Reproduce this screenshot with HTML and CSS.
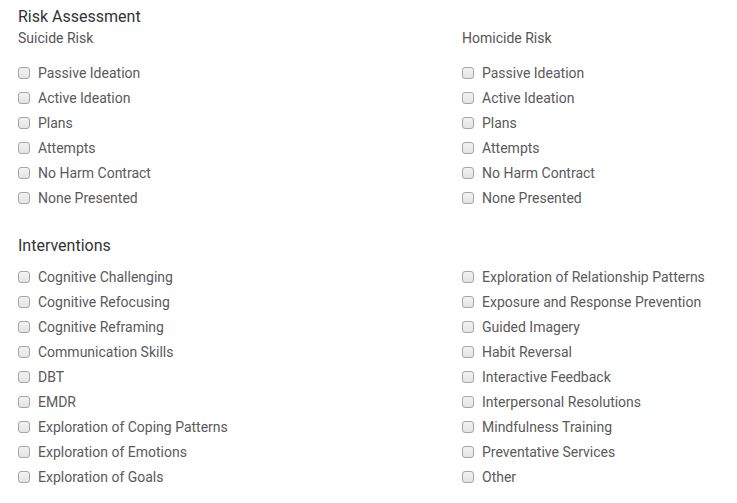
FILE: index.html
```html
<!DOCTYPE html>
<html>
<head>
<meta charset="utf-8">
<link rel="stylesheet" href="styles.css">
</head>
<body>
<div class="page">
  <h2 class="section-title">Risk Assessment</h2>
  <div class="grid">
    <div class="col">
      <div class="sub-title">Suicide Risk</div>
      <ul class="list">
        <li><label><input type="checkbox"><span>Passive Ideation</span></label></li>
        <li><label><input type="checkbox"><span>Active Ideation</span></label></li>
        <li><label><input type="checkbox"><span>Plans</span></label></li>
        <li><label><input type="checkbox"><span>Attempts</span></label></li>
        <li><label><input type="checkbox"><span>No Harm Contract</span></label></li>
        <li><label><input type="checkbox"><span>None Presented</span></label></li>
      </ul>
    </div>
    <div class="col">
      <div class="sub-title">Homicide Risk</div>
      <ul class="list">
        <li><label><input type="checkbox"><span>Passive Ideation</span></label></li>
        <li><label><input type="checkbox"><span>Active Ideation</span></label></li>
        <li><label><input type="checkbox"><span>Plans</span></label></li>
        <li><label><input type="checkbox"><span>Attempts</span></label></li>
        <li><label><input type="checkbox"><span>No Harm Contract</span></label></li>
        <li><label><input type="checkbox"><span>None Presented</span></label></li>
      </ul>
    </div>
  </div>
  <h2 class="section-title interventions">Interventions</h2>
  <div class="grid">
    <ul class="list list-tight">
      <li><label><input type="checkbox"><span>Cognitive Challenging</span></label></li>
      <li><label><input type="checkbox"><span>Cognitive Refocusing</span></label></li>
      <li><label><input type="checkbox"><span>Cognitive Reframing</span></label></li>
      <li><label><input type="checkbox"><span>Communication Skills</span></label></li>
      <li><label><input type="checkbox"><span>DBT</span></label></li>
      <li><label><input type="checkbox"><span>EMDR</span></label></li>
      <li><label><input type="checkbox"><span>Exploration of Coping Patterns</span></label></li>
      <li><label><input type="checkbox"><span>Exploration of Emotions</span></label></li>
      <li><label><input type="checkbox"><span>Exploration of Goals</span></label></li>
    </ul>
    <ul class="list list-tight">
      <li><label><input type="checkbox"><span>Exploration of Relationship Patterns</span></label></li>
      <li><label><input type="checkbox"><span>Exposure and Response Prevention</span></label></li>
      <li><label><input type="checkbox"><span>Guided Imagery</span></label></li>
      <li><label><input type="checkbox"><span>Habit Reversal</span></label></li>
      <li><label><input type="checkbox"><span>Interactive Feedback</span></label></li>
      <li><label><input type="checkbox"><span>Interpersonal Resolutions</span></label></li>
      <li><label><input type="checkbox"><span>Mindfulness Training</span></label></li>
      <li><label><input type="checkbox"><span>Preventative Services</span></label></li>
      <li><label><input type="checkbox"><span>Other</span></label></li>
    </ul>
  </div>
</div>
</body>
</html>
```
FILE: styles.css
```css
html, body {
  margin: 0;
  padding: 0;
  background: #ffffff;
}
body {
  font-family: Roboto, "Liberation Sans", Arial, sans-serif;
  color: #555555;
}
.page {
  padding: 7px 0 0 18px;
}
.section-title {
  margin: 0;
  font-size: 16px;
  line-height: 20px;
  font-weight: 400;
  color: #333333;
}
.section-title.interventions {
  margin-top: 26px;
}
.grid {
  display: grid;
  grid-template-columns: 444px 1fr;
}
.sub-title {
  font-size: 14px;
  line-height: 20px;
  margin-top: 1px;
  color: #555555;
}
.list {
  list-style: none;
  margin: 12px 0 0 0;
  padding: 0;
}
.list-tight {
  margin-top: 8px;
}
.list li {
  height: 25px;
  display: flex;
  align-items: center;
}
.list label {
  display: flex;
  align-items: center;
  font-size: 14px;
  color: #5a5a5a;
}
.list input[type="checkbox"] {
  appearance: none;
  -webkit-appearance: none;
  width: 12px;
  height: 12px;
  margin: 0 8px 0 0;
  border: 1px solid #a6a6a6;
  border-radius: 3px;
  background: linear-gradient(#f2f2f2, #e4e4e4);
  box-sizing: border-box;
}
```
